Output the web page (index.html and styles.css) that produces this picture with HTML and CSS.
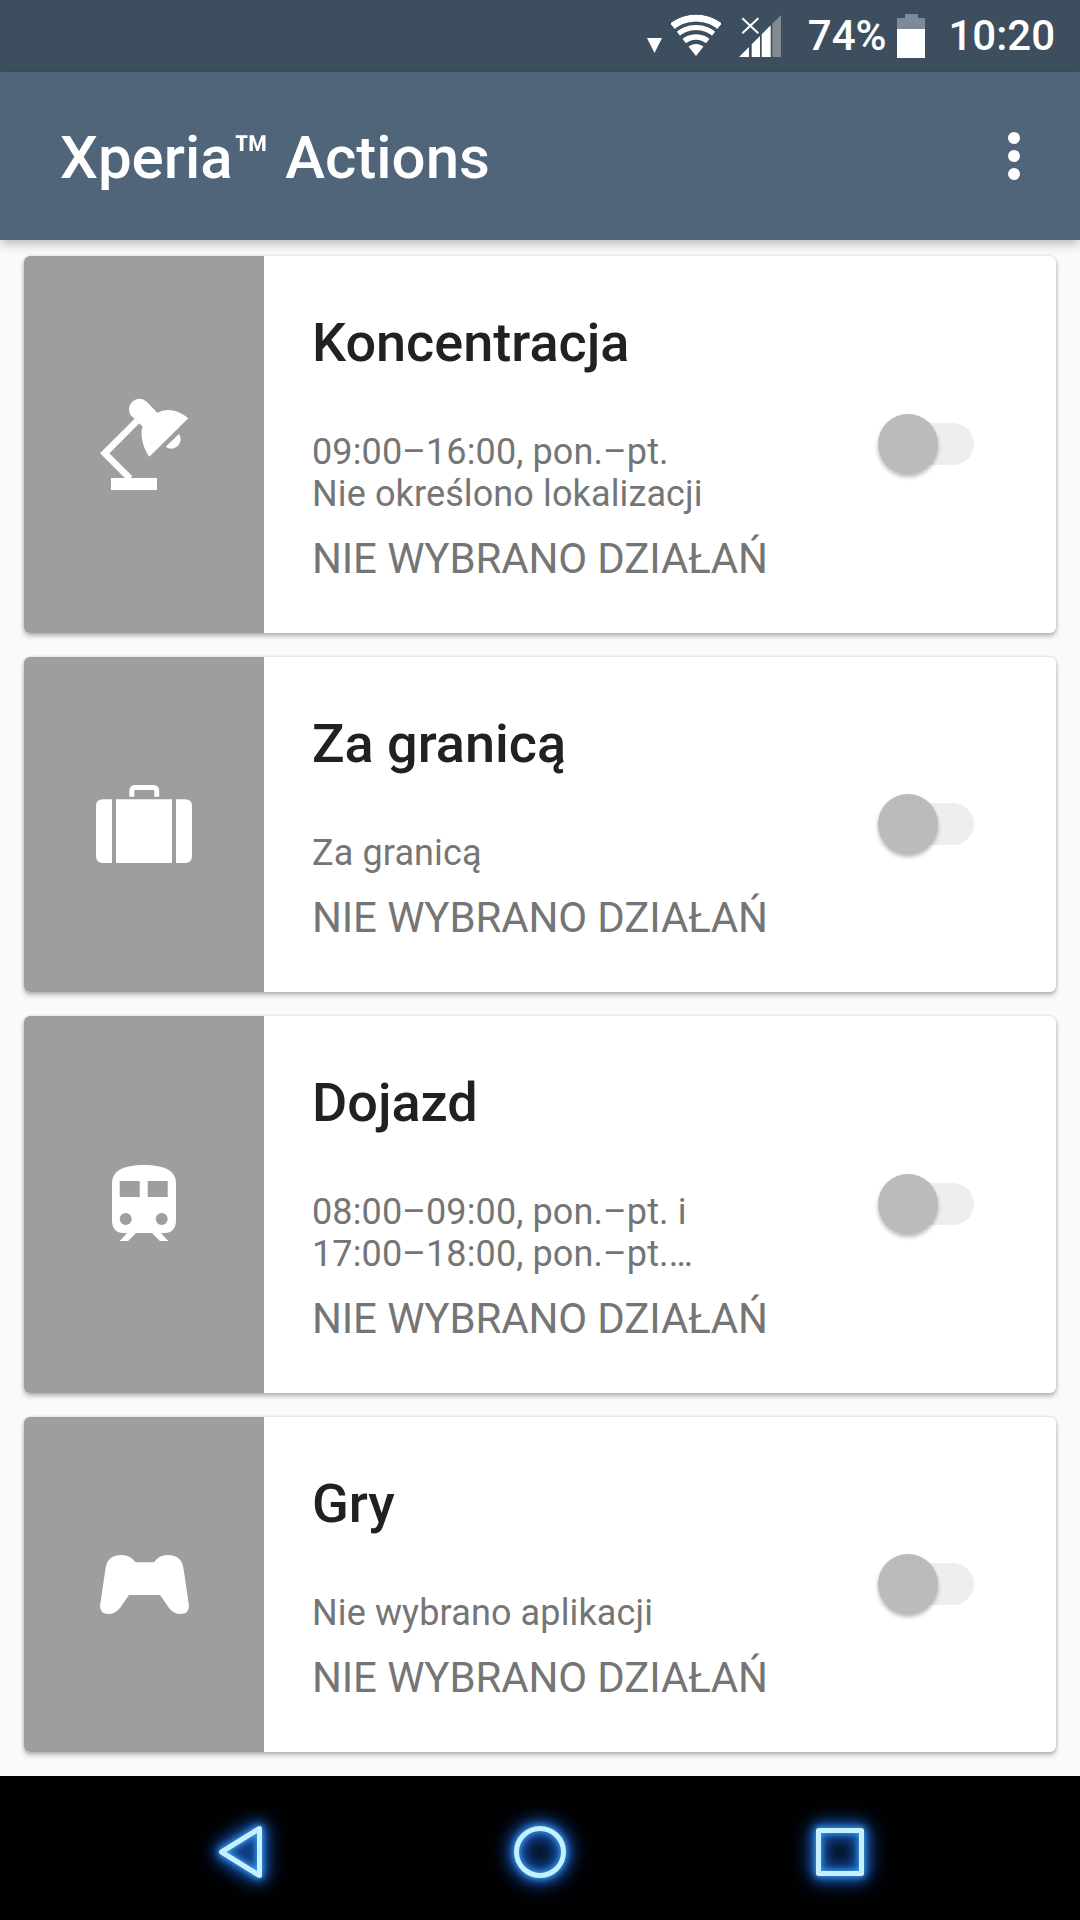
FILE: index.html
```html
<!DOCTYPE html>
<html lang="pl">

<head>
    <meta charset="UTF-8">
    <meta name="viewport" content="width=device-width, initial-scale=1.0">
    <title>Xperia Actions</title>

    <link rel="stylesheet" href="styles.css">
</head>

<body>

    <div class="status-bar">
        <svg class="st-arrow" viewBox="0 0 15 15"><path d="M0 0H15L7.5 15Z" /></svg>
        <svg class="st-wifi" viewBox="0 0 50 42">
            <defs>
                <clipPath id="wifi-clip"><path d="M25 42L-1 9Q25 -8 51 9Z" /></clipPath>
            </defs>
            <g clip-path="url(#wifi-clip)">
                <circle cx="25" cy="42" r="12" fill="#fff" />
                <circle class="wifi-ring" cx="25" cy="42" r="19" stroke-width="5.5" />
                <circle class="wifi-ring" cx="25" cy="42" r="28.5" stroke-width="5" />
                <circle class="wifi-ring" cx="25" cy="42" r="38" stroke-width="7" />
            </g>
        </svg>
        <svg class="st-signal" viewBox="0 0 42 42">
            <path fill="#fff" d="M0 42L10 32V42ZM12.7 29.3L21 21V42H12.7ZM22.7 19.3L31.7 10.3V42H22.7Z" />
            <path fill="#838b92" d="M33.3 8.7L42 0V42H33.3Z" />
            <path stroke="#fff" stroke-width="2" d="M3.3 3.3L19.3 18.3M19.3 3.3L3.3 18.3" />
        </svg>
        <span class="st-text st-pct">74%</span>
        <svg class="st-battery" viewBox="0 0 28 44">
            <path fill="#7d8b98" d="M8 0H21V4H28V15H0V4H8Z" />
            <path fill="#fff" d="M0 15H28V44H0Z" />
        </svg>
        <span class="st-text st-time">10:20</span>
    </div>

    <div class="app-bar">
        <h1 class="app-title">Xperia™ Actions</h1>
        <div class="menu-dots"><i></i><i></i><i></i></div>
    </div>

    <div class="list">

        <div class="card">
            <div class="card-icon">
                <svg class="ic-lamp" viewBox="0 0 89 93">
                    <path d="M88.3 21.3Q78 13 68 13Q62 13 57.3 15.7L46.7 4.7A10.5 10.5 0 0 0 31 18.5L42.7 29.7Q41 33 41.7 40Q43 51 49.3 59.7Z" />
                    <path d="M79 37A9.3 9.3 0 0 1 65.7 49.7Z" />
                    <path d="M37 24L4.7 56.3L30 81.5" fill="none" stroke="#fff" stroke-width="6.6" />
                    <path d="M11 81H57V93H11Z" />
                </svg>
            </div>
            <div class="card-body">
                <div class="card-text">
                    <h2 class="card-title">Koncentracja</h2>
                    <p class="card-sub">09:00–16:00, pon.–pt.<br>Nie określono lokalizacji</p>
                    <p class="card-action">NIE WYBRANO DZIAŁAŃ</p>
                </div>
                <div class="switch"></div>
            </div>
        </div>

        <div class="card">
            <div class="card-icon">
                <svg class="ic-case" viewBox="0 0 96 78">
                    <path d="M16 14.3V78H7Q0 78 0 71V21Q0 14.3 7 14.3ZM20 14.3H76V78H20ZM80 14.3H89Q96 14.3 96 21V71Q96 78 89 78H80Z" />
                    <path d="M35.8 11.7V6Q35.8 2.5 39 2.5H57.5Q60.7 2.5 60.7 6V11.7" fill="none" stroke="#fff" stroke-width="5" />
                </svg>
            </div>
            <div class="card-body">
                <div class="card-text">
                    <h2 class="card-title">Za granicą</h2>
                    <p class="card-sub">Za granicą</p>
                    <p class="card-action">NIE WYBRANO DZIAŁAŃ</p>
                </div>
                <div class="switch"></div>
            </div>
        </div>

        <div class="card">
            <div class="card-icon">
                <svg class="ic-train" viewBox="0 0 64 76">
                    <path fill-rule="evenodd" d="M0 18Q0 0 32 0Q64 0 64 18V55Q64 68 52 68H12Q0 68 0 55ZM7.7 16V32H27.7V16ZM35.7 16V32H55.7V16ZM13.7 48A6 6 0 1 0 13.7 60A6 6 0 1 0 13.7 48ZM49.7 48A6 6 0 1 0 49.7 60A6 6 0 1 0 49.7 48Z" />
                    <path d="M16 67H25L16 76H7.7ZM39 67H48L56.3 76H48Z" />
                </svg>
            </div>
            <div class="card-body">
                <div class="card-text">
                    <h2 class="card-title">Dojazd</h2>
                    <p class="card-sub">08:00–09:00, pon.–pt. i<br>17:00–18:00, pon.–pt.…</p>
                    <p class="card-action">NIE WYBRANO DZIAŁAŃ</p>
                </div>
                <div class="switch"></div>
            </div>
        </div>

        <div class="card">
            <div class="card-icon">
                <svg class="ic-pad" viewBox="0 0 89 59">
                    <path d="M35.7 7.3H54Q59 0 67.3 0Q81 0 83.3 12.3L89 50.7Q89 59 80.7 59Q74 59 69 53L60 40H29L20 53Q15 59 8.3 59Q0 59 0 50.7L5.7 12.3Q8 0 21.7 0Q30 0 35.7 7.3Z" />
                </svg>
            </div>
            <div class="card-body">
                <div class="card-text">
                    <h2 class="card-title">Gry</h2>
                    <p class="card-sub">Nie wybrano aplikacji</p>
                    <p class="card-action">NIE WYBRANO DZIAŁAŃ</p>
                </div>
                <div class="switch"></div>
            </div>
        </div>

    </div>

    <div class="nav-bar">
        <svg class="nav-icon" viewBox="0 0 64 64"><path d="M51.5 8.5V55.5L13.5 32Z" /></svg>
        <svg class="nav-icon" viewBox="0 0 64 64"><circle cx="32" cy="32" r="23.5" /></svg>
        <svg class="nav-icon" viewBox="0 0 64 64"><path d="M10.5 10.5H53.5V53.5H10.5Z" /></svg>
    </div>

</body>

</html>
```

FILE: styles.css
```css
* {
    box-sizing: border-box;
}
body {
    margin: 0;
    width: 1080px;
    height: 1920px;
    display: flex;
    flex-direction: column;
    overflow: hidden;
    background: #fafafa;
    font-family: Roboto, sans-serif;
}

/* status bar */
.status-bar {
    height: 72px;
    background: #3d4f5f;
    display: flex;
    align-items: center;
    justify-content: flex-end;
    padding-right: 25px;
    color: #fff;
}
.status-bar svg {
    display: block;
    fill: #fff;
}
.st-arrow {
    width: 15px;
    height: 15px;
    margin-top: 18px;
}
.st-wifi {
    width: 50px;
    height: 42px;
    margin-left: 9px;
    margin-top: -2px;
}
.wifi-ring {
    fill: none;
    stroke: #fff;
}
.st-signal {
    width: 42px;
    height: 42px;
    margin-left: 18px;
}
.st-text {
    font-size: 42px;
    line-height: 44px;
    font-weight: 500;
}
.st-pct {
    margin-left: 27px;
}
.st-battery {
    width: 28px;
    height: 44px;
    margin-left: 11px;
}
.st-time {
    margin-left: 23px;
}

/* app bar */
.app-bar {
    height: 168px;
    background: #506579;
    display: flex;
    align-items: center;
    justify-content: space-between;
    padding: 0 60px;
    position: relative;
    z-index: 2;
    box-shadow: 0 4px 10px rgba(0, 0, 0, 0.25);
}
.app-title {
    margin: 2px 0 0;
    color: #fff;
    font-size: 60px;
    font-weight: 500;
}
.menu-dots {
    display: flex;
    flex-direction: column;
    gap: 6px;
}
.menu-dots i {
    display: block;
    width: 12px;
    height: 12px;
    border-radius: 50%;
    background: #fff;
}

/* cards */
.list {
    flex: 1;
    display: flex;
    flex-direction: column;
    gap: 24px;
    padding: 16px 24px 0;
}
.card {
    display: flex;
    background: #fff;
    border-radius: 6px;
    overflow: hidden;
    box-shadow: 0 3px 5px rgba(0, 0, 0, 0.28), 0 0 3px rgba(0, 0, 0, 0.14);
}
.card-icon {
    width: 240px;
    background: #9e9e9e;
    display: flex;
    align-items: center;
    justify-content: center;
    flex-shrink: 0;
}
.card-icon svg {
    display: block;
    fill: #fff;
}
.ic-lamp {
    width: 89px;
    height: 93px;
    margin-bottom: 2px;
}
.ic-case {
    width: 96px;
    height: 78px;
    margin-bottom: 2px;
}
.ic-train {
    width: 64px;
    height: 76px;
    margin-bottom: 4px;
}
.ic-pad {
    width: 89px;
    height: 59px;
}
.card-body {
    flex: 1;
    display: flex;
    align-items: center;
    justify-content: space-between;
    padding: 0 82px 0 48px;
}
.card-text {
    padding: 49px 0 46px;
}
.card-title {
    margin: 0;
    color: #212121;
    font-size: 54px;
    line-height: 76px;
    font-weight: 500;
}
.card-sub {
    margin: 50px 0 0;
    color: #757575;
    font-size: 36px;
    line-height: 42px;
    letter-spacing: 0.12px;
}
.card-action {
    margin: 16px 0 0;
    color: #757575;
    font-size: 42px;
    line-height: 56px;
    letter-spacing: -0.13px;
}
.switch {
    width: 88px;
    height: 42px;
    margin-bottom: 2px;
    border-radius: 21px;
    background: #eeeeee;
    position: relative;
}
.switch::before {
    content: "";
    position: absolute;
    left: -8px;
    top: -9px;
    width: 60px;
    height: 60px;
    border-radius: 50%;
    background: #babcba;
    box-shadow: 0 3px 4px rgba(0, 0, 0, 0.28);
}

/* nav */
.nav-bar {
    height: 144px;
    background: #000;
    position: relative;
    z-index: 2;
    display: flex;
    align-items: center;
    justify-content: center;
    gap: 236px;
    padding-top: 8px;
}
.nav-icon {
    width: 64px;
    height: 64px;
    overflow: visible;
    fill: none;
    stroke: #c4f0ff;
    stroke-width: 5;
    stroke-linejoin: round;
    filter: drop-shadow(0 0 3px #4db4ff) drop-shadow(0 0 5px #1c64c0) drop-shadow(0 0 7px #12458f) drop-shadow(0 0 9px #0e3a80);
}
```
